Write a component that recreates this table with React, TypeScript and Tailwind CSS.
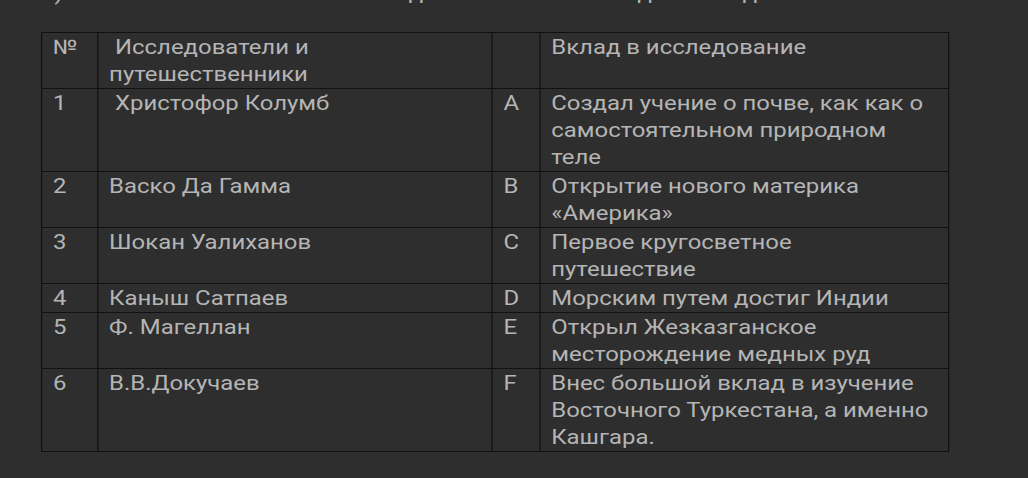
import React from "react";

const rows: [string, string[], string, string[]][] = [
  ["1", ["\u00a0Христофор Колумб"], "A", ["Создал учение о почве, как как о", "самостоятельном природном", "теле"]],
  ["2", ["Васко Да Гамма"], "B", ["Открытие нового материка", "«Америка»"]],
  ["3", ["Шокан Уалиханов"], "C", ["Первое кругосветное", "путешествие"]],
  ["4", ["Каныш Сатпаев"], "D", ["Морским путем достиг Индии"]],
  ["5", ["Ф. Магеллан"], "E", ["Открыл Жезказганское", "месторождение медных руд"]],
  ["6", ["В.В.Докучаев"], "F", ["Внес большой вклад в изучение", "Восточного Туркестана, а именно", "Кашгара."]],
];

const cell =
  "border border-[#111111] align-top pl-[9px] pr-[4px] pt-[1px] pb-0 text-left font-normal whitespace-nowrap";

function Lines({ lines }: { lines: string[] }) {
  return (
    <>
      {lines.map((l, i) => (
        <React.Fragment key={i}>
          {i > 0 && <br />}
          {l}
        </React.Fragment>
      ))}
    </>
  );
}

export default function App() {
  return (
    <div
      className="w-[1028px] h-[478px] overflow-hidden bg-[#2e2e2e] text-[#b5b5b5] text-[20px] leading-[27px]"
      style={{ fontFamily: "Roboto, 'Noto Sans', sans-serif" }}
    >
      <div className="ml-[41px] w-[759px] origin-left scale-x-[1.195]">
        <p className="-mt-[20px] whitespace-nowrap">
          3) Сопоставьте известных исследователей и их вклад в исследование
        </p>
        <table className="mt-[25px] table-fixed border-collapse w-[759px]">
          <colgroup>
            <col className="w-[47px]" />
            <col className="w-[330px]" />
            <col className="w-[40px]" />
            <col className="w-[342px]" />
          </colgroup>
          <thead>
            <tr>
              <th className={cell}>№</th>
              <th className={cell}>
                <Lines lines={["\u00a0Исследователи и", "путешественники"]} />
              </th>
              <th className={cell}></th>
              <th className={cell}>
                <Lines lines={["Вклад в исследование", "\u00a0"]} />
              </th>
            </tr>
          </thead>
          <tbody>
            {rows.map((r) => (
              <tr key={r[0]}>
                <td className={cell}>{r[0]}</td>
                <td className={cell}>
                  <Lines lines={r[1]} />
                </td>
                <td className={cell}>{r[2]}</td>
                <td className={cell}>
                  <Lines lines={r[3]} />
                </td>
              </tr>
            ))}
          </tbody>
        </table>
      </div>
    </div>
  );
}
